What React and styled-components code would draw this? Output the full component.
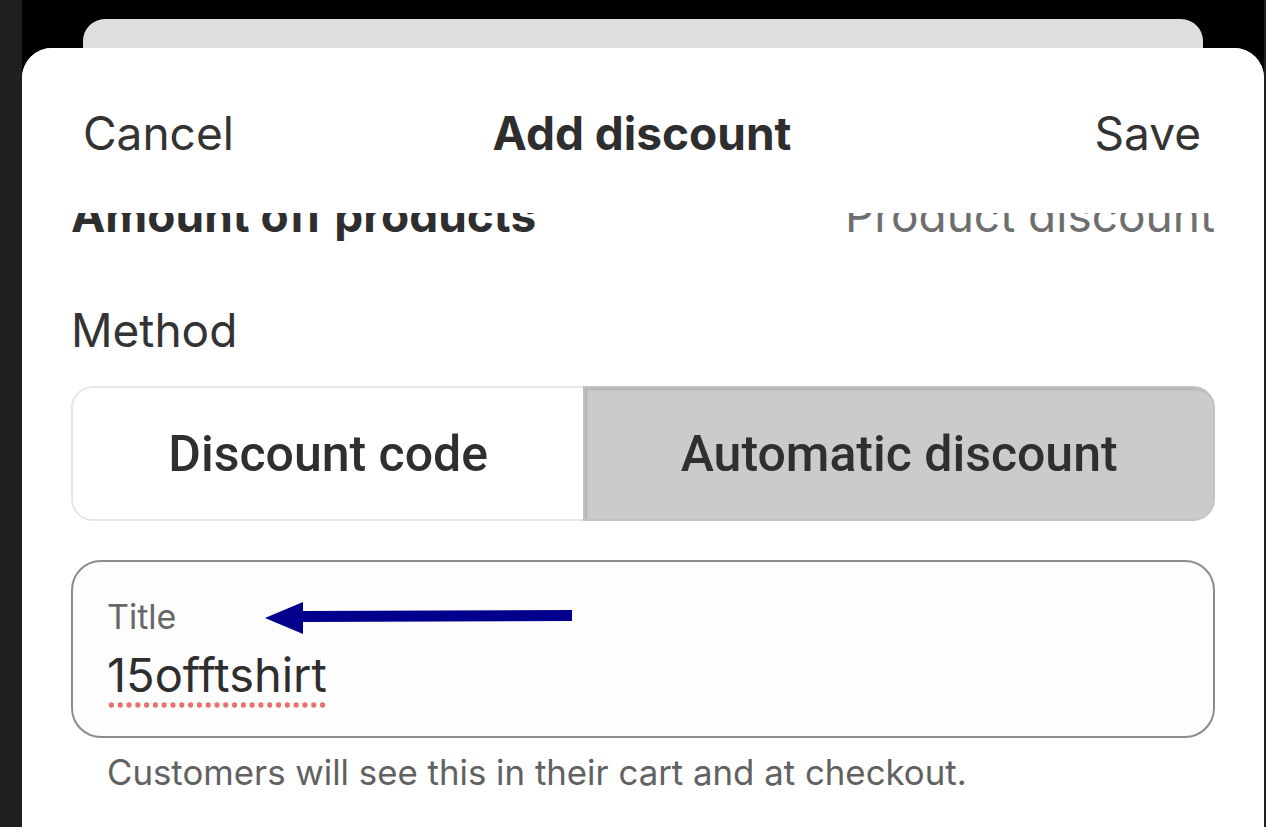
import React from "react";
import styled, { createGlobalStyle } from "styled-components";

const GlobalStyle = createGlobalStyle`
  html, body {
    margin: 0;
    padding: 0;
    background: #000;
  }
  body {
    font-family: Inter, "Noto Sans", "Liberation Sans", sans-serif;
    color: #303030;
  }
`;

const Screen = styled.div`
  display: flex;
  height: 827px;
  overflow: hidden;
  background: #000;
`;

const SideStrip = styled.div`
  width: ${(p) => p.width}px;
  flex-shrink: 0;
  background: #1d1f21;
`;

const Stage = styled.div`
  flex: 1;
  display: flex;
  flex-direction: column;
  min-width: 0;
`;

const BackSheet = styled.div`
  height: 29px;
  margin: 19px 61px 0;
  background: #dedede;
  border-radius: 22px 22px 0 0;
`;

const Sheet = styled.div`
  flex: 1;
  display: flex;
  flex-direction: column;
  background: #fff;
  border-radius: 30px 30px 0 0;
  overflow: hidden;
`;

const Header = styled.div`
  height: 165px;
  box-sizing: border-box;
  padding: 57px 63px 0 61px;
  display: grid;
  grid-template-columns: 1fr auto 1fr;
  align-items: start;
  font-size: 46px;
  line-height: 56px;
  position: relative;
  z-index: 1;
  background: #fff;
`;

const HeaderButton = styled.span`
  color: #333;
  font-weight: 400;
  justify-self: ${(p) => (p.end ? "end" : "start")};
`;

const HeaderTitle = styled.span`
  font-weight: 700;
  color: #2e2e2e;
`;

const Body = styled.div`
  flex: 1;
  overflow: hidden;
  padding: 0 49px;
`;

const SummaryRow = styled.div`
  margin-top: -26px;
  display: flex;
  justify-content: space-between;
  font-size: 46px;
  line-height: 56px;
`;

const SummaryName = styled.span`
  font-weight: 700;
  color: #2e2e2e;
`;

const SummaryType = styled.span`
  color: #6e6e6e;
`;

const SectionLabel = styled.div`
  margin-top: 59px;
  font-size: 46px;
  line-height: 56px;
  color: #333;
`;

const Segmented = styled.div`
  margin-top: 28px;
  display: flex;
  height: 135px;
`;

const Segment = styled.div`
  flex: 1 1 auto;
  display: flex;
  align-items: center;
  justify-content: center;
  box-sizing: border-box;
  font-family: Roboto, "Liberation Sans", sans-serif;
  font-weight: 500;
  font-size: 50px;
  color: #2f2f2f;
  background: ${(p) => (p.active ? "#cbcbcb" : "#fff")};
  border: 2px solid ${(p) => (p.active ? "#c2c2c2" : "#e6e6e6")};
  border-right-width: ${(p) => (p.active ? "2px" : "0")};
  border-radius: ${(p) => (p.active ? "0 22px 22px 0" : "22px 0 0 22px")};
  box-shadow: ${(p) =>
    p.active ? "inset 2px 2px 2px rgba(0,0,0,0.12)" : "none"};
`;

const Field = styled.div`
  position: relative;
  margin-top: 39px;
  height: 178px;
  box-sizing: border-box;
  border: 2.5px solid #8c8c8c;
  border-radius: 30px;
  background: #fdfdfd;
  padding: 35px 34px 0;
`;

const FieldLabel = styled.div`
  font-size: 34px;
  line-height: 40px;
  color: #676767;
`;

const FieldValue = styled.div`
  margin-top: 12px;
  font-size: 47px;
  line-height: 52px;
  color: #2e2e2e;
`;

const Misspelled = styled.span`
  padding-bottom: 5px;
  background-image: radial-gradient(circle, #e87070 2.4px, transparent 3px);
  background-repeat: repeat-x;
  background-position: 0 100%;
  background-size: 8.8px 6px;
`;

const Arrow = styled.svg`
  position: absolute;
  left: 192px;
  top: 40px;
`;

const Helper = styled.div`
  margin-top: 14px;
  padding-left: 36px;
  font-size: 34.8px;
  line-height: 40px;
  color: #616161;
`;

export default function App() {
  return (
    <>
      <GlobalStyle />
      <Screen>
        <SideStrip width={22} />
        <Stage>
          <BackSheet />
          <Sheet>
            <Header>
              <HeaderButton>Cancel</HeaderButton>
              <HeaderTitle>Add discount</HeaderTitle>
              <HeaderButton end>Save</HeaderButton>
            </Header>
            <Body>
              <SummaryRow>
                <SummaryName>Amount off products</SummaryName>
                <SummaryType>Product discount</SummaryType>
              </SummaryRow>
              <SectionLabel>Method</SectionLabel>
              <Segmented>
                <Segment>Discount code</Segment>
                <Segment active>Automatic discount</Segment>
              </Segmented>
              <Field>
                <FieldLabel>Title</FieldLabel>
                <FieldValue>
                  <Misspelled>15offtshirt</Misspelled>
                </FieldValue>
                <Arrow width="308" height="32" viewBox="0 0 308 32">
                  <polygon
                    points="0,16 38,0 38,9 307,8 307,19 38,20 38,32"
                    fill="#00008c"
                  />
                </Arrow>
              </Field>
              <Helper>Customers will see this in their cart and at checkout.</Helper>
            </Body>
          </Sheet>
        </Stage>
        <SideStrip width={2} />
      </Screen>
    </>
  );
}
